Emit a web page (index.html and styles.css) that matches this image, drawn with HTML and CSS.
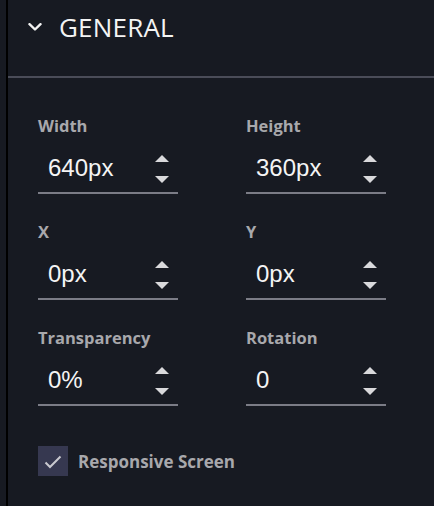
FILE: index.html
```html
<!DOCTYPE html>
<html>
<head>
<meta charset="utf-8">
<link rel="stylesheet" href="styles.css">
</head>
<body>
<div class="shell">
  <div class="panel">
    <div class="header">
      <svg class="chev" width="14" height="8" viewBox="0 0 14 8"><path d="M1.5 1.2 L7 6.5 L12.5 1.2" fill="none" stroke="#f2f2f2" stroke-width="2.4" stroke-linecap="round" stroke-linejoin="round"/></svg>
      <span class="title">GENERAL</span>
    </div>
    <div class="body">
      <div class="grid">
        <div class="field">
          <div class="label">Width</div>
          <div class="input"><span class="value">640px</span><span class="spin"><span class="up"></span><span class="down"></span></span></div>
        </div>
        <div class="field">
          <div class="label">Height</div>
          <div class="input"><span class="value">360px</span><span class="spin"><span class="up"></span><span class="down"></span></span></div>
        </div>
        <div class="field">
          <div class="label">X</div>
          <div class="input"><span class="value">0px</span><span class="spin"><span class="up"></span><span class="down"></span></span></div>
        </div>
        <div class="field">
          <div class="label">Y</div>
          <div class="input"><span class="value">0px</span><span class="spin"><span class="up"></span><span class="down"></span></span></div>
        </div>
        <div class="field">
          <div class="label">Transparency</div>
          <div class="input"><span class="value">0%</span><span class="spin"><span class="up"></span><span class="down"></span></span></div>
        </div>
        <div class="field">
          <div class="label">Rotation</div>
          <div class="input"><span class="value">0</span><span class="spin"><span class="up"></span><span class="down"></span></span></div>
        </div>
      </div>
      <label class="check">
        <span class="box"><svg width="18" height="14" viewBox="0 0 18 14"><path d="M1.5 7.5 L6 12 L16.5 1.5" fill="none" stroke="#c9c9cf" stroke-width="2"/></svg></span>
        <span class="check-text">Responsive Screen</span>
      </label>
    </div>
  </div>
</div>
</body>
</html>
```
FILE: styles.css
```css
html, body {
  margin: 0;
  padding: 0;
  background: #171a22;
  height: 100%;
}
.shell {
  padding-left: 6px;
  height: 100%;
}
.panel {
  border-left: 2px solid #000;
  height: 100%;
  box-sizing: border-box;
}
.header {
  height: 76px;
  border-bottom: 2px solid #4a4c58;
  display: flex;
  align-items: flex-start;
  box-sizing: content-box;
}
.chev {
  margin-left: 20px;
  margin-top: 23px;
  display: block;
}
.title {
  margin-left: 17px;
  margin-top: 10px;
  font-family: "Open Sans", sans-serif;
  font-size: 26px;
  line-height: 34px;
  color: #f4f4f4;
  letter-spacing: 0.2px;
}
.body {
  padding: 37px 0 0 30px;
}
.grid {
  display: grid;
  grid-template-columns: 140px 140px;
  column-gap: 68px;
  row-gap: 27px;
}
.label {
  font-family: "Open Sans", sans-serif;
  font-weight: 700;
  font-size: 16.5px;
  line-height: 22px;
  color: #a8a8ac;
}
.input {
  margin-top: 17px;
  height: 38px;
  border-bottom: 2px solid #7b7c86;
  display: flex;
  justify-content: space-between;
  align-items: flex-start;
}
.value {
  padding-left: 10px;
  font-family: "Liberation Sans", Arial, sans-serif;
  font-size: 24px;
  line-height: 28px;
  color: #f4f4f4;
}
.spin {
  display: flex;
  flex-direction: column;
  gap: 14px;
  margin-right: 9px;
  margin-top: 1px;
}
.up, .down {
  display: block;
  width: 0;
  height: 0;
  border-left: 7px solid transparent;
  border-right: 7px solid transparent;
}
.up {
  border-bottom: 7px solid #d9d9dc;
}
.down {
  border-top: 7px solid #d9d9dc;
}
.check {
  margin-top: 40px;
  display: flex;
  align-items: center;
  gap: 10px;
}
.box {
  width: 30px;
  height: 30px;
  background: #363850;
  display: flex;
  align-items: center;
  justify-content: center;
}
.box svg {
  display: block;
  margin-top: 1px;
}
.check-text {
  font-family: "Open Sans", sans-serif;
  font-weight: 700;
  font-size: 17px;
  color: #a8a8ac;
}
```
